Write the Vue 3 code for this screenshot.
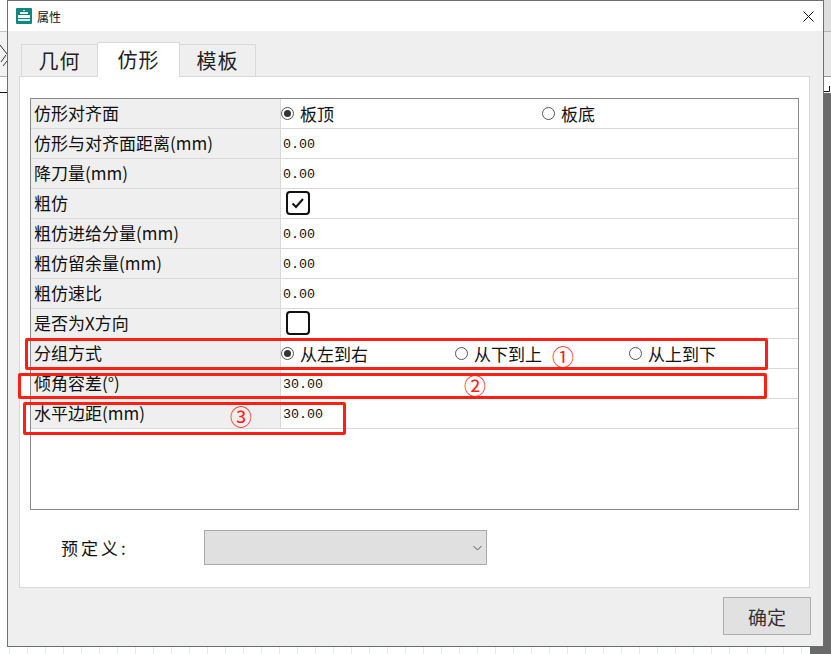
<script setup>
const rows = [
  { label: '仿形对齐面', type: 'radio', options: [{ t: '板顶', on: true, w: 261 }, { t: '板底', w: 200 }] },
  { label: '仿形与对齐面距离(mm)', type: 'val', value: '0.00' },
  { label: '降刀量(mm)', type: 'val', value: '0.00' },
  { label: '粗仿', type: 'check', on: true },
  { label: '粗仿进给分量(mm)', type: 'val', value: '0.00' },
  { label: '粗仿留余量(mm)', type: 'val', value: '0.00' },
  { label: '粗仿速比', type: 'val', value: '0.00' },
  { label: '是否为X方向', type: 'check', on: false },
  { label: '分组方式', type: 'radio', options: [{ t: '从左到右', on: true, w: 174 }, { t: '从下到上', w: 174 }, { t: '从上到下', w: 120 }] },
  { label: '倾角容差(°)', type: 'val', value: '30.00' },
  { label: '水平边距(mm)', type: 'val', value: '30.00' },
]
const tabs = [{ t: '几何', cls: 'first' }, { t: '仿形', on: true }, { t: '模板' }]
const marks = [{ cls: 'box1' }, { cls: 'box2' }, { cls: 'box3' }]
const nums = [
  { t: '①', cls: 'n1' }, { t: '②', cls: 'n2' }, { t: '③', cls: 'n3' },
]
const ticks = Array.from({ length: 45 }, (_, i) => 9 + i * 18)
</script>

<template>
  <div class="page">
    <svg class="backdrop" width="831" height="654" viewBox="0 0 831 654">
      <rect x="0" y="32" width="8" height="44" fill="#f2f2f2" />
      <rect x="0" y="31" width="8" height="1" fill="#c4c4c4" />
      <rect x="0" y="76" width="8" height="1" fill="#b0b0b0" />
      <rect x="0" y="92" width="8" height="1" fill="#111" />
      <path d="M0 45l7 9M1 62l5-7M3 66l4-5" stroke="#333" fill="none" />
      <rect x="823" y="0" width="8" height="31" fill="#dedede" />
      <rect x="823" y="31" width="8" height="1" fill="#b5b5b5" />
      <rect x="823" y="32" width="8" height="44" fill="#e6e6e6" />
      <rect x="823" y="76" width="8" height="1" fill="#999" />
      <path d="M823 91.500h6.500V86" stroke="#111" fill="none" />
      <rect x="823" y="93" width="8" height="561" fill="#6a6a6a" />
      <rect x="810" y="647" width="21" height="7" fill="#6a6a6a" />
      <rect v-for="x in ticks" :key="x" :x="x" y="647" width="1" height="7" fill="#e4ecea" />
    </svg>
    <div class="dialog">
      <div class="titlebar">
        <svg class="appicon" width="16" height="16" viewBox="0 0 16 16">
          <rect width="16" height="16" rx="1" fill="#11857f" />
          <rect x="7" y="2" width="2" height="1" fill="#cfeae8" />
          <rect x="4" y="4" width="8" height="2" fill="#e8f5f4" />
          <rect x="2" y="7" width="12" height="3" fill="#fff" />
          <rect x="2" y="11" width="12" height="2" fill="#d6eeec" />
        </svg>
        <span class="title">属性</span>
        <svg class="close" width="11" height="11" viewBox="0 0 11 11">
          <path d="M.5.5l10 10M10.500.5l-10 10" stroke="#111" fill="none" />
        </svg>
      </div>
      <div class="body">
        <div class="tabs">
          <div v-for="tab in tabs" :key="tab.t" class="tab" :class="[tab.cls, { active: tab.on }]">{{ tab.t }}</div>
        </div>
        <div class="panel">
          <div class="grid">
            <div v-for="row in rows" :key="row.label" class="row">
              <div class="label">{{ row.label }}</div>
              <div class="cell">
                <template v-if="row.type === 'radio'">
                  <span v-for="o in row.options" :key="o.t" class="opt" :style="{ width: o.w + 'px' }">
                    <span class="radio" :class="{ on: o.on }"></span>{{ o.t }}
                  </span>
                </template>
                <span v-else-if="row.type === 'val'" class="val">{{ row.value }}</span>
                <span v-else class="check">
                  <svg v-if="row.on" width="14" height="12" viewBox="0 0 14 12">
                    <path d="M1.500 6.500l3.500 3.500L12 2" stroke="#111" stroke-width="2" fill="none" />
                  </svg>
                </span>
              </div>
            </div>
          </div>
          <div class="predef">
            <span class="predef-label">预定义:</span>
            <div class="select">
              <svg width="9" height="6" viewBox="0 0 9 6">
                <path d="M.5 1l4 4 4-4" stroke="#555" fill="none" />
              </svg>
            </div>
          </div>
        </div>
        <div class="footer">
          <button class="ok">确定</button>
        </div>
      </div>
    </div>
    <div v-for="m in marks" :key="m.cls" class="mark" :class="m.cls"></div>
    <span v-for="n in nums" :key="n.t" class="num" :class="n.cls">{{ n.t }}</span>
  </div>
</template>

<style>
html, body { margin: 0; background: #fff; overflow: hidden; }
</style>

<style scoped>
.page {
  position: relative;
  width: 831px;
  height: 654px;
  overflow: hidden;
  background: #fff;
  font-family: "Noto Sans CJK SC", "Liberation Sans", sans-serif;
  color: #111;
}
.backdrop { position: absolute; left: 0; top: 0; }
.dialog {
  position: absolute;
  left: 7px;
  top: 0;
  width: 815px;
  height: 645px;
  border: 1px solid #6e6e6e;
  display: flex;
  flex-direction: column;
  background: #efefef;
}
.titlebar {
  height: 30px;
  background: #fff;
  display: flex;
  align-items: center;
  padding: 0 9px 0 8px;
  flex: none;
}
.title { font-size: 12px; margin-left: 5px; flex: 1; }
.body { flex: 1; display: flex; flex-direction: column; padding: 11px 13px 0 11px; }
.tabs { display: flex; align-items: flex-end; padding-left: 2px; height: 35px; position: relative; z-index: 1; margin-bottom: -1px; }
.tab {
  width: 76px;
  height: 33px;
  box-sizing: border-box;
  border: 1px solid #d9d9d9;
  border-bottom: 0;
  font-size: 20px;
  letter-spacing: 1px;
  display: flex;
  align-items: center;
  justify-content: center;
  line-height: 1;
  color: #222;
}
.tab.first { width: 77px; }
.tab + .tab { border-left: 0; }
.tab.active { width: 83px; height: 35px; background: #fff; border-left: 1px solid #d9d9d9; margin-left: -1px; }
.panel {
  height: 512px;
  box-sizing: border-box;
  background: #fff;
  border: 1px solid #d9d9d9;
  padding: 21px 10px 0 10px;
}
.grid {
  height: 410px;
  box-sizing: content-box;
  border: 1px solid #868a8e;
}
.row { display: flex; height: 30px; box-sizing: border-box; border-bottom: 1px solid #d9d9d9; }
.label {
  width: 250px;
  flex: none;
  box-sizing: border-box;
  padding-left: 3px;
  background: #efefef;
  border-right: 1px solid #d9d9d9;
  font-size: 17px;
  line-height: 28px;
  white-space: nowrap;
}
.cell { flex: 1; display: flex; align-items: center; font-size: 17px; }
.opt { display: inline-flex; align-items: center; flex: none; line-height: 1; }
.radio {
  width: 13px;
  height: 13px;
  box-sizing: border-box;
  border: 1px solid #555;
  border-radius: 50%;
  margin-right: 6px;
  background: #fff;
  position: relative;
}
.radio.on::after {
  content: "";
  position: absolute;
  inset: 2px;
  border-radius: 50%;
  background: #333;
}
.val { font-family: "Liberation Mono", monospace; font-size: 13.33px; padding: 2px 0 0 2px; }
.check {
  width: 24px;
  height: 24px;
  box-sizing: border-box;
  border: 2px solid #111;
  border-radius: 4px;
  margin: -2px 0 0 5px;
  display: flex;
  align-items: center;
  justify-content: center;
}
.predef { display: flex; align-items: center; margin-top: 20px; }
.predef-label { width: 143px; margin-left: 31px; font-size: 17px; letter-spacing: 3px; flex: none; }
.select {
  width: 283px;
  height: 35px;
  box-sizing: border-box;
  background: #e0e0e0;
  border: 1px solid #a9a9a9;
  display: flex;
  align-items: center;
  justify-content: flex-end;
  padding-right: 4px;
}
.footer { flex: 1; display: flex; justify-content: flex-end; align-items: flex-start; padding-top: 9px; margin-right: -1px; }
.ok {
  width: 88px;
  height: 38px;
  background: #e1e1e1;
  border: 1px solid #adadad;
  font: 19px "Noto Sans CJK SC", sans-serif;
  color: #333;
  padding: 0;
}
.mark { position: absolute; box-sizing: border-box; border: 3px solid #ff2014; border-radius: 2px; pointer-events: none; }
.box1 { left: 25px; top: 338px; width: 743px; height: 32px; }
.box2 { left: 18px; top: 373px; width: 749px; height: 26px; }
.box3 { left: 23px; top: 402px; width: 323px; height: 33px; }
.num { position: absolute; color: #ff2014; font-size: 22px; line-height: 20px; width: 20px; text-align: center; display: flex; justify-content: center; }
.n1 { left: 553px; top: 345px; }
.n2 { left: 465px; top: 374px; }
.n3 { left: 231px; top: 405px; }
</style>
